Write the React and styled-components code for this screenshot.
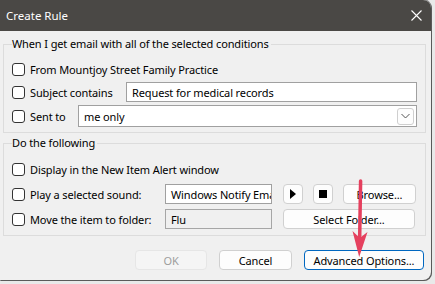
import styled, { createGlobalStyle } from "styled-components";

const GlobalStyle = createGlobalStyle`
    html, body {
        margin: 0;
        padding: 0;
        background: #e9e9e9;
        font-family: "Noto Sans", "Open Sans", sans-serif;
        font-size: 11px;
        letter-spacing: -0.12px;
        color: #000;
    }
`

const Screen = styled.div`
    position: relative;
    width: 435px;
    height: 284px;
    overflow: hidden;
`

const Dialog = styled.div`
    width: 431px;
    height: 280px;
    background: #f0f0f0;
    border-radius: 0 8px 8px 0;
    box-shadow: 1px 1px 0 #5a5a5a, 0 0 0 1px #8a8a8a;
    overflow: hidden;
    display: flex;
    flex-direction: column;
`

const TitleBar = styled.div`
    height: 31px;
    flex: none;
    background: #4a4845;
    color: #fff;
    display: flex;
    align-items: center;
    justify-content: space-between;
    padding: 0 9px 0 6px;
    font-size: 11.5px;
    letter-spacing: 0;
`

const Body = styled.div`
    padding: 5px 5px 0 3px;
    display: flex;
    flex-direction: column;
`

const Group = styled.fieldset`
    margin: ${props => props.top || 0}px 0 0 0;
    padding: ${props => props.pad};
    border: 1px solid #dcdcdc;
    min-width: 0;
`

const Legend = styled.legend`
    padding: 0 2px 0 0;
    margin-left: 0;
    line-height: 16px;
`

const Rows = styled.div`
    display: flex;
    flex-direction: column;
    gap: ${props => props.gap}px;
`

const Row = styled.div`
    display: flex;
    align-items: center;
    height: ${props => props.h || 22}px;
`

const Check = styled.span`
    width: 11px;
    height: 11px;
    border: 1px solid #333;
    border-radius: 3px;
    background: #fff;
    flex: none;
    margin-right: 5px;
`

const Label = styled.span`
    width: ${props => props.w ? props.w + "px" : "auto"};
    flex: none;
    white-space: nowrap;
`

const Input = styled.div`
    box-sizing: border-box;
    height: ${props => props.h || 20}px;
    width: ${props => props.w ? props.w + "px" : "auto"};
    flex: ${props => props.w ? "none" : 1};
    border: 1px solid ${props => props.grey ? "#a6a6a6" : "#a0a0a0"};
    background: ${props => props.grey ? "#f0f0f0" : "#fff"};
    padding: 0 5px;
    display: flex;
    align-items: center;
    justify-content: space-between;
    white-space: nowrap;
    overflow: hidden;
`

const DropButton = styled.span`
    box-sizing: border-box;
    width: 17px;
    height: 17px;
    border: 1px solid #cfcfcf;
    border-radius: 3px;
    background: #fdfdfd;
    display: flex;
    align-items: center;
    justify-content: center;
    margin-right: -3px;
`

const Button = styled.div`
    box-sizing: border-box;
    height: ${props => props.h || 20}px;
    width: ${props => props.w}px;
    flex: none;
    margin-left: ${props => props.ml || 0}px;
    border: 1px solid ${props => props.primary ? "#0067c0" : props.disabled ? "#e6e6e6" : "#d0d0d0"};
    border-radius: 4px;
    background: ${props => props.disabled ? "#f5f5f5" : "#fdfdfd"};
    color: ${props => props.disabled ? "#9d9d9d" : "#000"};
    display: flex;
    align-items: center;
    justify-content: center;
    white-space: nowrap;
`

const Footer = styled.div`
    display: flex;
    justify-content: flex-end;
    gap: 12px;
    margin-top: 14px;
    padding-right: 2px;
`

const Arrow = styled.svg`
    position: absolute;
    left: 0;
    top: 0;
    pointer-events: none;
`

function App() {
    return (
        <Screen>
            <GlobalStyle />
            <Dialog>
                <TitleBar>
                    <span>Create Rule</span>
                    <svg width="11" height="11" viewBox="0 0 11 11">
                        <path d="M0.5 0.5 L10.5 10.5 M10.5 0.5 L0.5 10.5" stroke="#fff" strokeWidth="1.1" />
                    </svg>
                </TitleBar>
                <Body>
                    <Group pad="6px 8px 4px 8px">
                        <Legend>When I get email with all of the selected conditions</Legend>
                        <Rows gap={1}>
                            <Row><Check /><Label>From Mountjoy Street Family Practice</Label></Row>
                            <Row><Check /><Label w={96}>Subject contains</Label><Input>Request for medical records</Input></Row>
                            <Row h={24}>
                                <Check /><Label w={48}>Sent to</Label>
                                <Input h={22}>
                                    <span>me only</span>
                                    <DropButton>
                                        <svg width="9" height="6" viewBox="0 0 9 6">
                                            <path d="M0.5 1 L4.5 5 L8.5 1" fill="none" stroke="#555" strokeWidth="1" />
                                        </svg>
                                    </DropButton>
                                </Input>
                            </Row>
                        </Rows>
                    </Group>
                    <Group top={2} pad="8px 8px 6px 8px">
                        <Legend>Do the following</Legend>
                        <Rows gap={5}>
                            <Row h={20}><Check /><Label>Display in the New Item Alert window</Label></Row>
                            <Row h={20}>
                                <Check /><Label w={135}>Play a selected sound:</Label>
                                <Input w={107}>Windows Notify Email</Input>
                                <Button w={20} ml={11}>
                                    <svg width="6" height="10" viewBox="0 0 6 10"><path d="M0 0 L6 5 L0 10 Z" fill="#000" /></svg>
                                </Button>
                                <Button w={20} ml={10}>
                                    <svg width="8" height="8" viewBox="0 0 8 8"><rect width="8" height="8" fill="#000" /></svg>
                                </Button>
                                <Button w={73} ml={10}>Browse...</Button>
                            </Row>
                            <Row h={20}>
                                <Check /><Label w={135}>Move the item to folder:</Label>
                                <Input w={107} grey>Flu</Input>
                                <Button w={132} ml={11}>Select Folder...</Button>
                            </Row>
                        </Rows>
                    </Group>
                    <Footer>
                        <Button w={72} disabled>OK</Button>
                        <Button w={73}>Cancel</Button>
                        <Button w={120} primary>Advanced Options...</Button>
                    </Footer>
                </Body>
            </Dialog>
            <Arrow width="435" height="284" viewBox="0 0 435 284">
                <path d="M360.6 181 L359.6 242" stroke="#e5405e" strokeWidth="3.5" strokeLinecap="round" />
                <path d="M352.5 231 L359.2 257 L367.5 232 L359.8 238 Z" fill="#e5405e" />
            </Arrow>
        </Screen>
    )
}

export default App;
